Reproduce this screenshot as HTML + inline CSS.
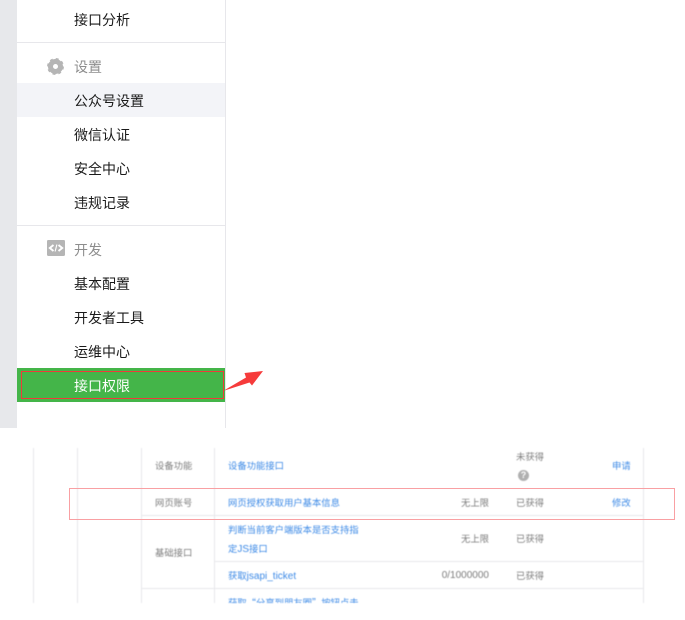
<!DOCTYPE html>
<html lang="zh-CN">
<head>
<meta charset="utf-8">
<style>
html,body{margin:0;padding:0;background:#fff}
body{width:685px;height:620px;position:relative;overflow:hidden;font-family:"Liberation Sans","Noto Sans CJK SC",sans-serif}
.a{position:absolute}
.m{position:absolute;left:74px;font-size:14px;line-height:20px;color:#1a1a1a;white-space:nowrap}
.g{color:#8d8d8d}
.t{position:absolute;font-size:9.33px;line-height:12px;white-space:nowrap;color:#7d7d7d}
.b{color:#3d8ae6}
.n{font-size:10px}
.q{font-family:"Noto Sans CJK SC",sans-serif}
.r{text-align:right;width:80px}
#tbl{position:absolute;left:0;top:430px;width:685px;height:190px;filter:blur(.4px)}
</style>
</head>
<body>
<div class="a" style="left:0;top:0;width:17px;height:428px;background:#e7e8eb"></div>
<div class="a" style="left:225px;top:0;width:1px;height:428px;background:#e7e7eb"></div>
<div class="a" style="left:17px;top:42px;width:208px;height:1px;background:#e7e7eb"></div>
<div class="a" style="left:17px;top:225px;width:208px;height:1px;background:#e7e7eb"></div>
<div class="a" style="left:17px;top:83px;width:208px;height:34px;background:#f3f4f8"></div>
<div class="a" style="left:17px;top:368px;width:208px;height:34px;background:#44b549"></div>
<div class="a" style="left:21px;top:371px;width:201px;height:26px;border:1px solid #f03a3a"></div>

<div class="m" style="top:10px">接口分析</div>
<svg class="a" style="left:47px;top:58px" width="17" height="17" viewBox="0 0 17 17">
<circle cx="8.5" cy="8.5" r="5" fill="none" stroke="#b5b5b5" stroke-width="5"/>
<circle cx="8.5" cy="8.5" r="7.7" fill="none" stroke="#b5b5b5" stroke-width="1.5" stroke-dasharray="3 3.05"/>
</svg>
<div class="m g" style="top:57px">设置</div>
<div class="m" style="top:91px">公众号设置</div>
<div class="m" style="top:125px">微信认证</div>
<div class="m" style="top:159px">安全中心</div>
<div class="m" style="top:193px">违规记录</div>

<svg class="a" style="left:47px;top:240px" width="18" height="16" viewBox="0 0 18 16">
<rect width="18" height="16" rx="1.2" fill="#b5b5b5"/>
<path d="M6.500 5 2.800 8 6.500 11M11.500 5 15.200 8 11.500 11" fill="none" stroke="#fff" stroke-width="1.9"/>
<path d="M9.900 4.500 8.100 11.500" fill="none" stroke="#fff" stroke-width="1.1"/>
</svg>
<div class="m g" style="top:240px">开发</div>
<div class="m" style="top:274px">基本配置</div>
<div class="m" style="top:308px">开发者工具</div>
<div class="m" style="top:342px">运维中心</div>
<div class="m" style="top:376px;color:#fff">接口权限</div>

<svg class="a" style="left:222px;top:368px" width="42" height="24" viewBox="0 0 42 24">
<path d="M1 23 24 9.500 22.500 5 41 3 30 17.500 27.500 14.500Z" fill="#f63b3b"/>
</svg>

<div id="tbl">
<div class="a" style="left:33px;top:18px;width:1px;height:155px;background:#e7e7eb"></div>
<div class="a" style="left:77px;top:18px;width:1px;height:155px;background:#e7e7eb"></div>
<div class="a" style="left:141px;top:18px;width:1px;height:155px;background:#e7e7eb"></div>
<div class="a" style="left:214px;top:18px;width:1px;height:155px;background:#e7e7eb"></div>
<div class="a" style="left:643px;top:18px;width:1px;height:155px;background:#e7e7eb"></div>
<div class="a" style="left:141px;top:85px;width:503px;height:1px;background:#e7e7eb"></div>
<div class="a" style="left:214px;top:131px;width:430px;height:1px;background:#e7e7eb"></div>
<div class="a" style="left:141px;top:158px;width:503px;height:1px;background:#e7e7eb"></div>

<div class="t" style="left:155px;top:30px">设备功能</div>
<div class="t b" style="left:228px;top:30px">设备功能接口</div>
<div class="t" style="left:516px;top:21px">未获得</div>
<div class="a" style="left:518px;top:40px;width:11px;height:11px;border-radius:50%;background:#b0b0b0;color:#fff;font-size:9px;line-height:11px;text-align:center;font-weight:bold">?</div>
<div class="t b" style="left:612px;top:30px">申请</div>

<div class="t" style="left:155px;top:67px">网页账号</div>
<div class="t b" style="left:228px;top:67px">网页授权获取用户基本信息</div>
<div class="t r" style="left:409px;top:67px">无上限</div>
<div class="t" style="left:516px;top:67px">已获得</div>
<div class="t b" style="left:612px;top:67px">修改</div>

<div class="t" style="left:155px;top:117px">基础接口</div>
<div class="t b" style="left:228px;top:94px">判断当前客户端版本是否支持指</div>
<div class="t b" style="left:228px;top:113px">定<span class="n">JS</span>接口</div>
<div class="t r" style="left:409px;top:103px">无上限</div>
<div class="t" style="left:516px;top:103px">已获得</div>

<div class="t b" style="left:228px;top:140px">获取<span class="n">jsapi_ticket</span></div>
<div class="t r n" style="left:409px;top:140px">0/1000000</div>
<div class="t" style="left:516px;top:140px">已获得</div>

<div class="a" style="left:228px;top:164px;width:200px;height:9px;overflow:hidden"><div class="t b q" style="left:0;top:2px">获取“分享到朋友圈”按钮点击</div></div>
</div>
<div class="a" style="left:69px;top:488px;width:604px;height:30px;border:1px solid #f9a0a3"></div>
</body>
</html>
